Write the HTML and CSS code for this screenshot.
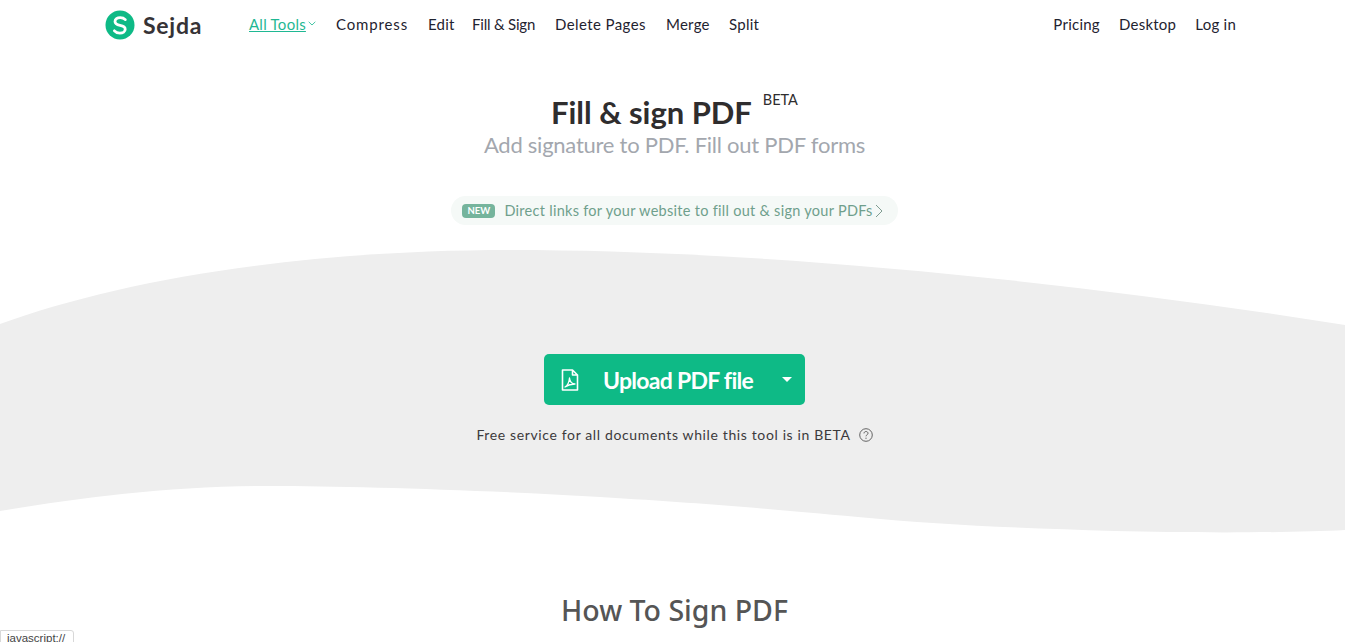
FILE: index.html
```html
<!DOCTYPE html>
<html lang="en">
<head>
<meta charset="utf-8">
<title>Fill &amp; sign PDF</title>
<link rel="stylesheet" href="styles.css">
</head>
<body>
<header class="topbar">
  <a class="brand" href="#">
    <svg class="brand-icon" viewBox="0 0 30 30"><circle cx="15" cy="15" r="14.5" fill="#0eba86"/><path d="M20.3 9.6C19 8.2 17.2 7.6 15.2 7.6c-3 0-5.2 1.6-5.2 4 0 2.500 2.200 3.300 5 3.800 2.900.5 5.200 1.200 5.200 3.800 0 2.400-2.300 3.900-5.300 3.900-2.200 0-4.200-.8-5.500-2.300" fill="none" stroke="#fff" stroke-width="2.800" stroke-linecap="round"/></svg>
    <span class="brand-name">Sejda</span>
  </a>
  <nav class="nav-main">
    <a class="nav-active" href="#"><span class="nav-underline">All Tools</span><svg class="nav-caret" viewBox="0 0 8 5"><path d="M.7.8 4 4l3.300-3.200" fill="none" stroke="#2fbf9b" stroke-width=".9"/></svg></a>
    <a class="nav-wide" href="#">Compress</a>
    <a href="#">Edit</a>
    <a class="nav-tight" href="#">Fill &amp; Sign</a>
    <a class="nav-loose" href="#">Delete Pages</a>
    <a href="#">Merge</a>
    <a href="#">Split</a>
  </nav>
  <nav class="nav-side">
    <a href="#">Pricing</a>
    <a href="#">Desktop</a>
    <a href="#">Log in</a>
  </nav>
</header>

<main>
  <section class="intro">
    <div class="title-row">
      <h1>Fill &amp; sign PDF</h1>
      <sup class="beta">BETA</sup>
    </div>
    <p class="subtitle">Add signature to PDF. Fill out PDF forms</p>
    <a class="promo" href="#">
      <span class="promo-new">NEW</span>
      <span class="promo-text">Direct links for your website to fill out &amp; sign your PDFs</span>
      <svg class="promo-chevron" viewBox="0 0 8 14"><path d="M1 1l6 6-6 6" fill="none" stroke="#7f9c91" stroke-width="1"/></svg>
    </a>
  </section>

  <section class="hero">
    <svg class="hero-wave" viewBox="0 0 1345 290" preserveAspectRatio="none"><path d="M0 74C120 30 300 0 510 0 760 0 1060 30 1345 75V280C1290 283 1190 283 1115 281 1020 278 940 275 858 267 760 258 700 253 600 247 480 240 350 236 270 236 170 236 80 248 0 261Z" fill="#eee"/></svg>
    <div class="upload-btn">
      <svg class="pdf-icon" viewBox="0 0 18 22"><path d="M1.500 1h10l5 5v15h-15zM11.500 1v5h5" fill="none" stroke="#fff" stroke-width="1.600" stroke-linejoin="round"/><path d="M4 18c2-1 4-4 4.500-9 .5 4 2.500 6 5.500 6-3 0-7 1-10 3z" fill="none" stroke="#fff" stroke-width="1.300" stroke-linejoin="round"/></svg>
      <span class="upload-label">Upload PDF file</span>
      <span class="upload-caret"></span>
    </div>
    <p class="free-note">Free service for all documents while this tool is in BETA
      <svg class="help-icon" viewBox="0 0 14 14"><circle cx="7" cy="7" r="6.300" fill="none" stroke="#555" stroke-width=".9"/><path d="M5 5.400c0-1.200.9-1.900 2-1.900s2 .7 2 1.800c0 1.500-2 1.500-2 3" fill="none" stroke="#555" stroke-width=".9"/><circle cx="7" cy="10.200" r=".6" fill="#555"/></svg>
    </p>
  </section>

  <h2 class="how-title">How To Sign PDF</h2>
</main>

<div class="status-tip">javascript://</div>
</body>
</html>
```
FILE: styles.css
```css
* { box-sizing: border-box; }
html, body { margin: 0; height: 642px; overflow: hidden; background: #fff; }
body { font-family: "Lato", "Liberation Sans", sans-serif; color: #2f2d2e; position: relative; }
a { color: inherit; text-decoration: none; }
p, h1, h2 { margin: 0; }

.topbar { display: flex; align-items: center; height: 49px; padding: 0 109px 0 105px; font-size: 15px; color: #1f2330; }
.brand { display: flex; align-items: center; gap: 8px; width: 144px; }
.brand-icon { width: 30px; height: 30px; flex: none; }
.brand-name { font-size: 23px; font-weight: 700; color: #363336; letter-spacing: .75px; }
.nav-main { display: grid; grid-template-columns: 87px 92px 44px 83px 111px 63px auto; flex: 1; padding-bottom: 2px; letter-spacing: .25px; white-space: nowrap; }
.nav-wide { letter-spacing: .85px; }
.nav-tight { letter-spacing: -.2px; }
.nav-loose { letter-spacing: .4px; }
.nav-side { display: flex; gap: 19px; padding-bottom: 2px; letter-spacing: .25px; }
.nav-active { display: flex; align-items: center; gap: 2px; color: #1fb893; }
.nav-underline { text-decoration: underline; }
.nav-caret { width: 8px; height: 5px; }

.intro { display: flex; flex-direction: column; align-items: center; padding: 39px 0 0 4px; height: 201px; }
.title-row { display: flex; align-items: flex-start; justify-content: center; }
h1 { font-size: 31px; line-height: 48px; font-weight: 700; color: #2f2d2e; letter-spacing: -.05px; }
.beta { font-size: 14.500px; line-height: 18px; margin: 3px 0 0 11px; color: #2f2d2e; }
.subtitle { font-size: 22px; line-height: 26px; margin-top: -4px; color: #a3a7ae; letter-spacing: -.25px; }
.promo { display: flex; align-items: center; height: 29px; margin-top: 38px; padding: 0 15px 0 11px; border-radius: 15px; background: #f5f9f7; }
.promo-new { width: 33px; height: 14px; border-radius: 4px; background: #75b49c; color: #fff; font-size: 9.500px; font-weight: 700; line-height: 14px; text-align: center; }
.promo-text { margin-left: 9px; font-size: 14.500px; color: #6f9f8c; letter-spacing: .28px; }
.promo-chevron { width: 8px; height: 14px; margin-left: 2px; }

.hero { position: relative; height: 290px; display: flex; flex-direction: column; align-items: center; padding: 104px 0 0 4px; }
.hero-wave { position: absolute; left: 0; top: 0; width: 100%; height: 100%; }
.upload-btn { position: relative; display: flex; align-items: center; width: 261px; height: 51px; padding-left: 17px; border-radius: 5px; background: #0eba86; color: #fff; }
.pdf-icon { width: 18px; height: 22px; flex: none; }
.upload-label { margin-left: 24px; width: 150px; font-size: 23px; font-weight: 700; letter-spacing: -.72px; white-space: nowrap; }
.upload-caret { margin-left: 29px; border: 5px solid transparent; border-top-color: #fff; border-bottom-width: 0; }
.free-note { position: relative; display: flex; align-items: center; gap: 8px; margin-top: 20px; font-size: 14px; line-height: 20px; color: #3c3a3c; letter-spacing: .63px; }
.help-icon { width: 14px; height: 14px; }

.how-title { margin-top: 50px; padding-left: 4px; text-align: center; font-family: "Noto Sans", sans-serif; font-size: 28.500px; line-height: 40px; font-weight: 500; color: #555; }

.status-tip { position: absolute; left: 0; bottom: -4px; height: 16px; padding: 0 8px 0 6px; border: 1px solid #d8d8d8; border-radius: 0 3px 0 0; background: #fff; font-family: "Liberation Sans", sans-serif; font-size: 11.500px; line-height: 15px; color: #444; }
```
